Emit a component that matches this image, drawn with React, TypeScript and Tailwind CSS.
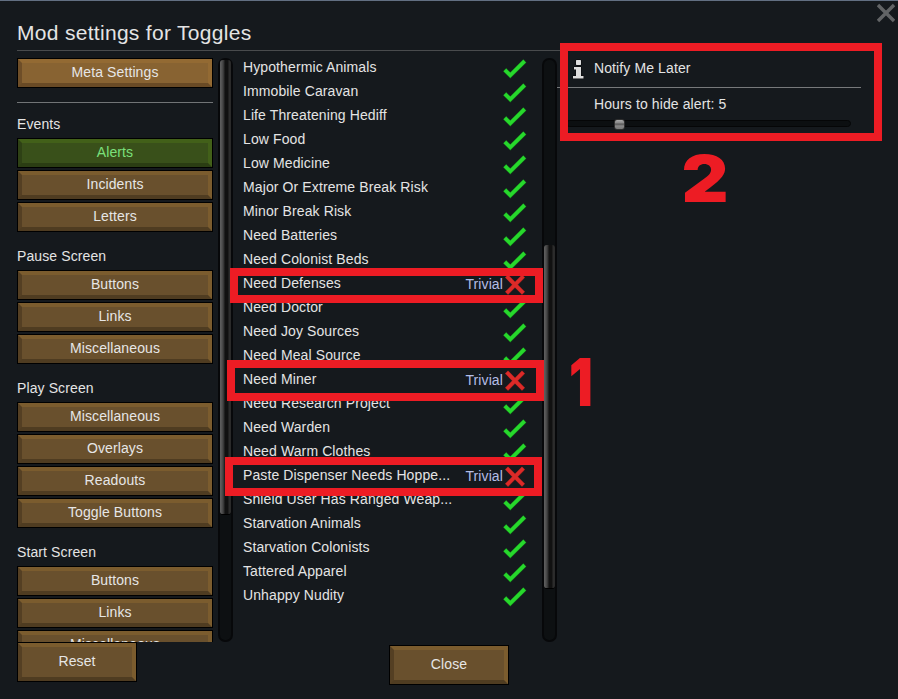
import React from "react";

type Tone = "meta" | "active" | "normal";

const tones: Record<Tone, string> = {
  meta: "bg-[#886332] border-t-[#936a33] border-r-[#936a33] border-b-[#694a25] border-l-[#6e4e28]",
  active: "bg-[#39501a] border-t-[#426019] border-r-[#426019] border-b-[#2b3d13] border-l-[#2e4115]",
  normal: "bg-[#69502d] border-t-[#7b5c2e] border-r-[#7b5c2e] border-b-[#4f3c21] border-l-[#543f23]",
};

function BevelButton({ label, tone = "normal", size = "h-[30px] w-[196px]" }: { label: string; tone?: Tone; size?: string }) {
  return (
    <button className={`block shrink-0 border border-black ${size}`}>
      <span
        className={`flex h-full w-full items-center justify-center border-4 ${tones[tone]} ${
          tone === "active" ? "text-[#7be07b]" : "text-[#e6e6e6]"
        }`}
      >
        <span className="relative -top-px">{label}</span>
      </span>
    </button>
  );
}

const sections: { title: string; items: string[] }[] = [
  { title: "Events", items: ["Alerts", "Incidents", "Letters"] },
  { title: "Pause Screen", items: ["Buttons", "Links", "Miscellaneous"] },
  { title: "Play Screen", items: ["Miscellaneous", "Overlays", "Readouts", "Toggle Buttons"] },
  { title: "Start Screen", items: ["Buttons", "Links", "Miscellaneous"] },
];

const alerts: [string, boolean][] = [
  ["Hypothermic Animals", true],
  ["Immobile Caravan", true],
  ["Life Threatening Hediff", true],
  ["Low Food", true],
  ["Low Medicine", true],
  ["Major Or Extreme Break Risk", true],
  ["Minor Break Risk", true],
  ["Need Batteries", true],
  ["Need Colonist Beds", true],
  ["Need Defenses", false],
  ["Need Doctor", true],
  ["Need Joy Sources", true],
  ["Need Meal Source", true],
  ["Need Miner", false],
  ["Need Research Project", true],
  ["Need Warden", true],
  ["Need Warm Clothes", true],
  ["Paste Dispenser Needs Hoppe...", false],
  ["Shield User Has Ranged Weap...", true],
  ["Starvation Animals", true],
  ["Starvation Colonists", true],
  ["Tattered Apparel", true],
  ["Unhappy Nudity", true],
];

function Check() {
  return (
    <svg width="24" height="24" viewBox="0 0 24 24" fill="none" strokeLinecap="square">
      <path d="M3.2 14.2 7.3 18.3 20.3 5.4" stroke="#17801c" strokeWidth="4.4" />
      <path d="M3.2 14.2 7.3 18.3 20.3 5.4" stroke="#27d82c" strokeWidth="3.6" />
    </svg>
  );
}

function Cross() {
  return (
    <svg width="24" height="24" viewBox="0 0 24 24" fill="none" strokeLinecap="square">
      <path d="M5 4.6 19 18.8M19 4.6 5 18.8" stroke="#8d1f1f" strokeWidth="4.4" />
      <path d="M5 4.6 19 18.8M19 4.6 5 18.8" stroke="#dc2a28" strokeWidth="3.6" />
    </svg>
  );
}

function Scrollbar({ offset, thumb }: { offset: string; thumb: string }) {
  return (
    <div className={`h-[584px] w-[15px] shrink-0 rounded-[7px] border-2 border-[#07080a] bg-[#0d1012] ${offset}`}>
      <div
        className={`w-[11px] rounded-[3px] border-b border-black bg-[linear-gradient(90deg,#606060_0px,#505050_2px,#303030_4px,#111_5px,#111_8px,#2d2d2d_9px,#292929_11px)] ${thumb}`}
      />
    </div>
  );
}

export default function App() {
  return (
    <div className="relative flex h-[699px] w-[898px] flex-col overflow-hidden border-t border-[#626f82] bg-[#15191d] font-['Liberation_Sans',Arial,sans-serif] text-[14px] leading-6 tracking-[0.11px] text-[#e4e4e4]">
      <header className="flex h-[49px] shrink-0 justify-between pl-[17px] pr-[3px]">
        <h1 className="pt-[18px] text-[21px] leading-7 tracking-[0.3px]">Mod settings for Toggles</h1>
        <button aria-label="Close window" className="mt-[2px] h-5 w-[18px]">
          <svg width="18" height="20" viewBox="0 0 18 20" fill="none" stroke="#626466" strokeWidth="3.4">
            <path d="M1 2 17 18M17 2 1 18" />
          </svg>
        </button>
      </header>
      <div className="ml-[17px] mr-[17px] h-px shrink-0 bg-[#494b4d]" />

      <main className="flex h-[591px] shrink-0 pl-[17px] pt-[7px]">
        <nav className="h-[584px] w-[196px] shrink-0 overflow-hidden">
          <BevelButton label="Meta Settings" tone="meta" />
          <div className="mt-[14px] h-px bg-[#717476]" />
          {sections.map((section, s) => (
            <section key={section.title} className={s === 0 ? "mt-[9px]" : "mt-2"}>
              <h2 className="mb-[2px] h-6">{section.title}</h2>
              <div className="flex flex-col gap-[2px] pb-1">
                {section.items.map((item) => (
                  <BevelButton key={item} label={item} tone={item === "Alerts" ? "active" : "normal"} />
                ))}
              </div>
            </section>
          ))}
        </nav>

        <div className="ml-[5px]">
          <Scrollbar offset="pt-0" thumb="h-[455px]" />
        </div>

        <ul className="-mt-[3px] ml-[10px] w-[285px] shrink-0">
          {alerts.map(([name, enabled]) => (
            <li key={name} className="flex h-6 items-center">
              <span className="grow whitespace-nowrap">{name}</span>
              {!enabled && <span className="pt-[2px] text-[#b4bde6]">Trivial</span>}
              <span className="mr-px mt-[4px] h-6 w-6 shrink-0">{enabled ? <Check /> : <Cross />}</span>
            </li>
          ))}
        </ul>

        <div className="ml-[14px]">
          <Scrollbar offset="pt-[185px]" thumb="h-[344px]" />
        </div>

        <aside className="w-[304px] shrink-0">
          <div className="flex h-[30px] items-start border-b border-[#77797b] pl-[15px]">
            <svg width="13" height="21" viewBox="0 0 13 21" className="mt-px">
              <path
                d="M4.5 1h4l.5.5v4l-.5.5h-4L4 5.500V1.500zM2 8h7v9h2.500v2.500H1V17h3v-6.500H2z"
                fill="#dedede"
                stroke="#08090a"
                strokeWidth="1"
                paintOrder="stroke"
              />
            </svg>
            <span className="-mt-[2px] ml-[9px]">Notify Me Later</span>
          </div>
          <div className="pl-[37px] pt-[4px]">Hours to hide alert: 5</div>
          <div className="ml-[9px] mt-[4px] flex h-[7px] w-[285px] items-center rounded-[4px] border border-[#050607] bg-[#0c0f11]">
            <div className="ml-[47px] mt-px h-[11px] w-[11px] shrink-0 rounded-[3px] border border-[#303030] bg-[linear-gradient(#aaa_0px,#888_3px,#555_4px,#888_6px,#777_9px)]" />
          </div>
        </aside>
      </main>

      <footer className="flex shrink-0 items-start pl-[17px]">
        <BevelButton label="Reset" size="h-[40px] w-[120px]" />
        <div className="ml-[252px] mt-[3px]">
          <BevelButton label="Close" size="h-[40px] w-[120px]" />
        </div>
      </footer>

      <div className="absolute left-[560px] top-[42px] h-[98px] w-[322px] border-8 border-[#ed1c24]" />
      <div className="absolute left-[230px] top-[267px] h-[35px] w-[313px] border-8 border-[#ed1c24]" />
      <div className="absolute left-[227px] top-[359px] h-[41px] w-[317px] border-8 border-[#ed1c24]" />
      <div className="absolute left-[225px] top-[456px] h-[39px] w-[317px] border-8 border-[#ed1c24]" />
      <div className="absolute left-[568px] top-[351px] flex h-[60px] w-[26px] items-center justify-center font-[Inter,sans-serif] text-[66px] font-black leading-none tracking-normal text-[#ed1c24]">
        <span className="scale-x-[0.8]">1</span>
      </div>
      <div className="absolute left-[682px] top-[147px] flex h-[60px] w-[46px] items-center justify-center font-[Inter,sans-serif] text-[65px] font-black leading-none tracking-normal text-[#ed1c24]">
        <span className="scale-x-[1.12]">2</span>
      </div>
    </div>
  );
}
